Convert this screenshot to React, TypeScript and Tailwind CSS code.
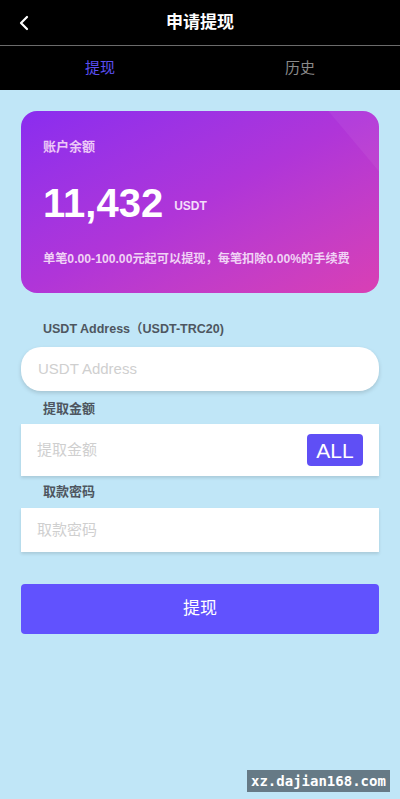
import React from "react";

export default function App() {
  const font = { fontFamily: '"Liberation Sans", Arial, "Noto Sans CJK SC", sans-serif' };
  return (
    <div className="relative min-h-[799px] w-[400px] bg-[#c0e6f7] overflow-hidden" style={font}>
      {/* header */}
      <div className="relative flex h-[45px] items-center justify-center bg-black">
        <svg className="absolute left-[18px] top-[15px]" width="12" height="16" viewBox="0 0 12 16">
          <path d="M9 2 L3 8 L9 14" stroke="white" strokeWidth="2.2" fill="none" strokeLinecap="round" strokeLinejoin="round" />
        </svg>
        <span className="text-[17px] font-bold text-white">申请提现</span>
      </div>
      <div className="h-px bg-[#6b6b6b]" />
      <div className="flex h-[44px] bg-black">
        <div className="flex flex-1 items-center justify-center text-[15px] text-[#5b4ff2]">提现</div>
        <div className="flex flex-1 items-center justify-center text-[15px] text-[#8a8a8a]">历史</div>
      </div>

      <div className="px-[21px] pt-[21px]">
        {/* card */}
        <div className="relative h-[182px] overflow-hidden rounded-[16px] bg-gradient-to-br from-[#8a2cef] via-[#b035d8] to-[#d93fb4] px-[22px] pt-[26px]">
          <div className="absolute right-[-70px] top-[-60px] h-[160px] w-[90px] rotate-[-40deg] bg-white/[0.05]" />
          <div className="relative text-[13px] font-bold text-[#ecc8f7]">账户余额</div>
          <div className="relative mt-[22px] flex items-end">
            <span className="text-[40px] font-bold leading-[48px] text-white">11,432</span>
            <span className="mb-[12px] ml-[11px] text-[12px] font-bold text-[#f3dcf9]">USDT</span>
          </div>
          <div className="relative mt-[23px] text-[12.2px] font-bold text-[#f0d2f5]">
            单笔0.00-100.00元起可以提现，每笔扣除0.00%的手续费
          </div>
        </div>

        {/* form */}
        <div className="mt-[27px] pl-[22px] text-[12.5px] font-bold text-[#4e5660]">USDT Address（USDT-TRC20)</div>
        <div className="mt-[8px] flex h-[44px] items-center rounded-[20px] bg-white px-[17px] shadow-[0_2px_4px_rgba(0,0,0,0.15)]">
          <span className="text-[15px] text-[#cfcfcf]">USDT Address</span>
        </div>

        <div className="mt-[8px] pl-[22px] text-[13px] font-bold text-[#4e5660]">提取金额</div>
        <div className="mt-[6px] flex h-[52px] items-center justify-between bg-white pl-[16px] pr-[16px] shadow-[0_2px_3px_rgba(0,0,0,0.12)]">
          <span className="text-[15px] text-[#cfcfcf]">提取金额</span>
          <div className="flex h-[32px] w-[56px] items-center justify-center rounded-[4px] bg-[#5f4ff5] text-[21px] text-white">ALL</div>
        </div>

        <div className="mt-[6px] pl-[22px] text-[13px] font-bold text-[#4e5660]">取款密码</div>
        <div className="mt-[6px] flex h-[44px] items-center bg-white px-[16px] shadow-[0_2px_3px_rgba(0,0,0,0.12)]">
          <span className="text-[15px] text-[#cfcfcf]">取款密码</span>
        </div>

        <div className="mt-[32px] flex h-[50px] items-center justify-center rounded-[4px] bg-[#6152fe] text-[17px] text-white">
          提现
        </div>
      </div>

      {/* watermark */}
      <div className="absolute left-[247px] top-[770px] bg-[#667a86] px-[4px] text-[14px] font-bold leading-[22px] text-white" style={{ fontFamily: '"DejaVu Sans Mono", monospace' }}>
        xz.dajian168.com
      </div>
    </div>
  );
}
